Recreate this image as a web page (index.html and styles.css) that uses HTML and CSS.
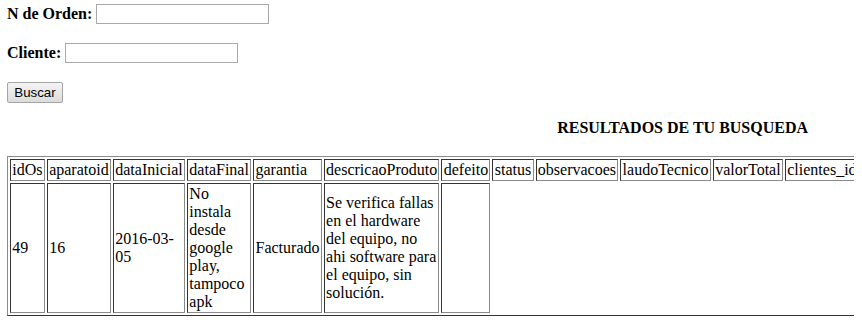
FILE: index.html
```html
<!DOCTYPE html>
<html lang="es">
<head>
    <meta charset="UTF-8">
    <title>Buscar orden</title>
    <link rel="stylesheet" href="styles.css">
</head>
<body>
    <form class="search-form" action="buscar.php" method="POST">
        <div class="field">
            <label for="orden">N de Orden:</label>
            <input type="text" id="orden" name="orden">
        </div>
        <div class="field">
            <label for="cliente">Cliente:</label>
            <input type="text" id="cliente" name="cliente">
        </div>
        <button type="submit" class="btn">Buscar</button>
    </form>

    <div class="results">
        <h4 class="results-title">RESULTADOS DE TU BUSQUEDA</h4>
        <table class="results-table">
            <tr>
                <td>idOs</td>
                <td>aparatoid</td>
                <td>dataInicial</td>
                <td>dataFinal</td>
                <td>garantia</td>
                <td>descricaoProduto</td>
                <td>defeito</td>
                <td>status</td>
                <td>observacoes</td>
                <td>laudoTecnico</td>
                <td>valorTotal</td>
                <td>clientes_id</td>
                <td>usuarios_id</td>
                <td>tecnicos_id</td>
                <td>formaPagamento</td>
                <td>dataEntrega</td>
                <td>acessorios</td>
                <td>prioridad</td>
            </tr>
            <tr>
                <td>49</td>
                <td>16</td>
                <td>2016-03-05</td>
                <td>No instala desde google play, tampoco apk</td>
                <td>Facturado</td>
                <td>Se verifica fallas en el hardware del equipo, no ahi software para el equipo, sin solución.</td>
                <td></td>
            </tr>
        </table>
    </div>
</body>
</html>
```

FILE: styles.css
```css
body {
  margin: 4px 8px 8px 7px;
  font-family: "Liberation Serif", "Times New Roman", serif;
  font-size: 16px;
  color: #000;
  background: #fff;
}

.search-form { margin: 0; }
.field { display: flex; align-items: center; gap: 4px; height: 20px; margin-bottom: 19px; }
.field label { font-weight: bold; }
.field input { width: 173px; height: 20px; box-sizing: border-box; border: 1px solid #a9a9a9; padding: 1px 2px; margin: 0; font: 13px "Liberation Sans", Arial, sans-serif; }

.btn {
  display: block;
  width: 56px;
  height: 21px;
  padding: 0;
  font: 13.3px "Liberation Sans", Arial, sans-serif;
  color: #000;
  background: linear-gradient(#f4f4f4, #dcdcdc);
  border: 1px solid #a5a5a5;
  border-radius: 2px;
}

.results { display: inline-block; margin-top: 16px; }
.results-title { margin: 0 0 19px; font-size: 16px; text-align: center; }

.results-table {
  border-collapse: separate;
  border-spacing: 2px;
  border: 1px solid;
  border-color: #8a8a8a #353535 #353535 #8a8a8a;
}
.results-table td {
  padding: 1px 1.3px;
  border: 1px solid;
  border-color: #353535 #8a8a8a #8a8a8a #353535;
}
```
